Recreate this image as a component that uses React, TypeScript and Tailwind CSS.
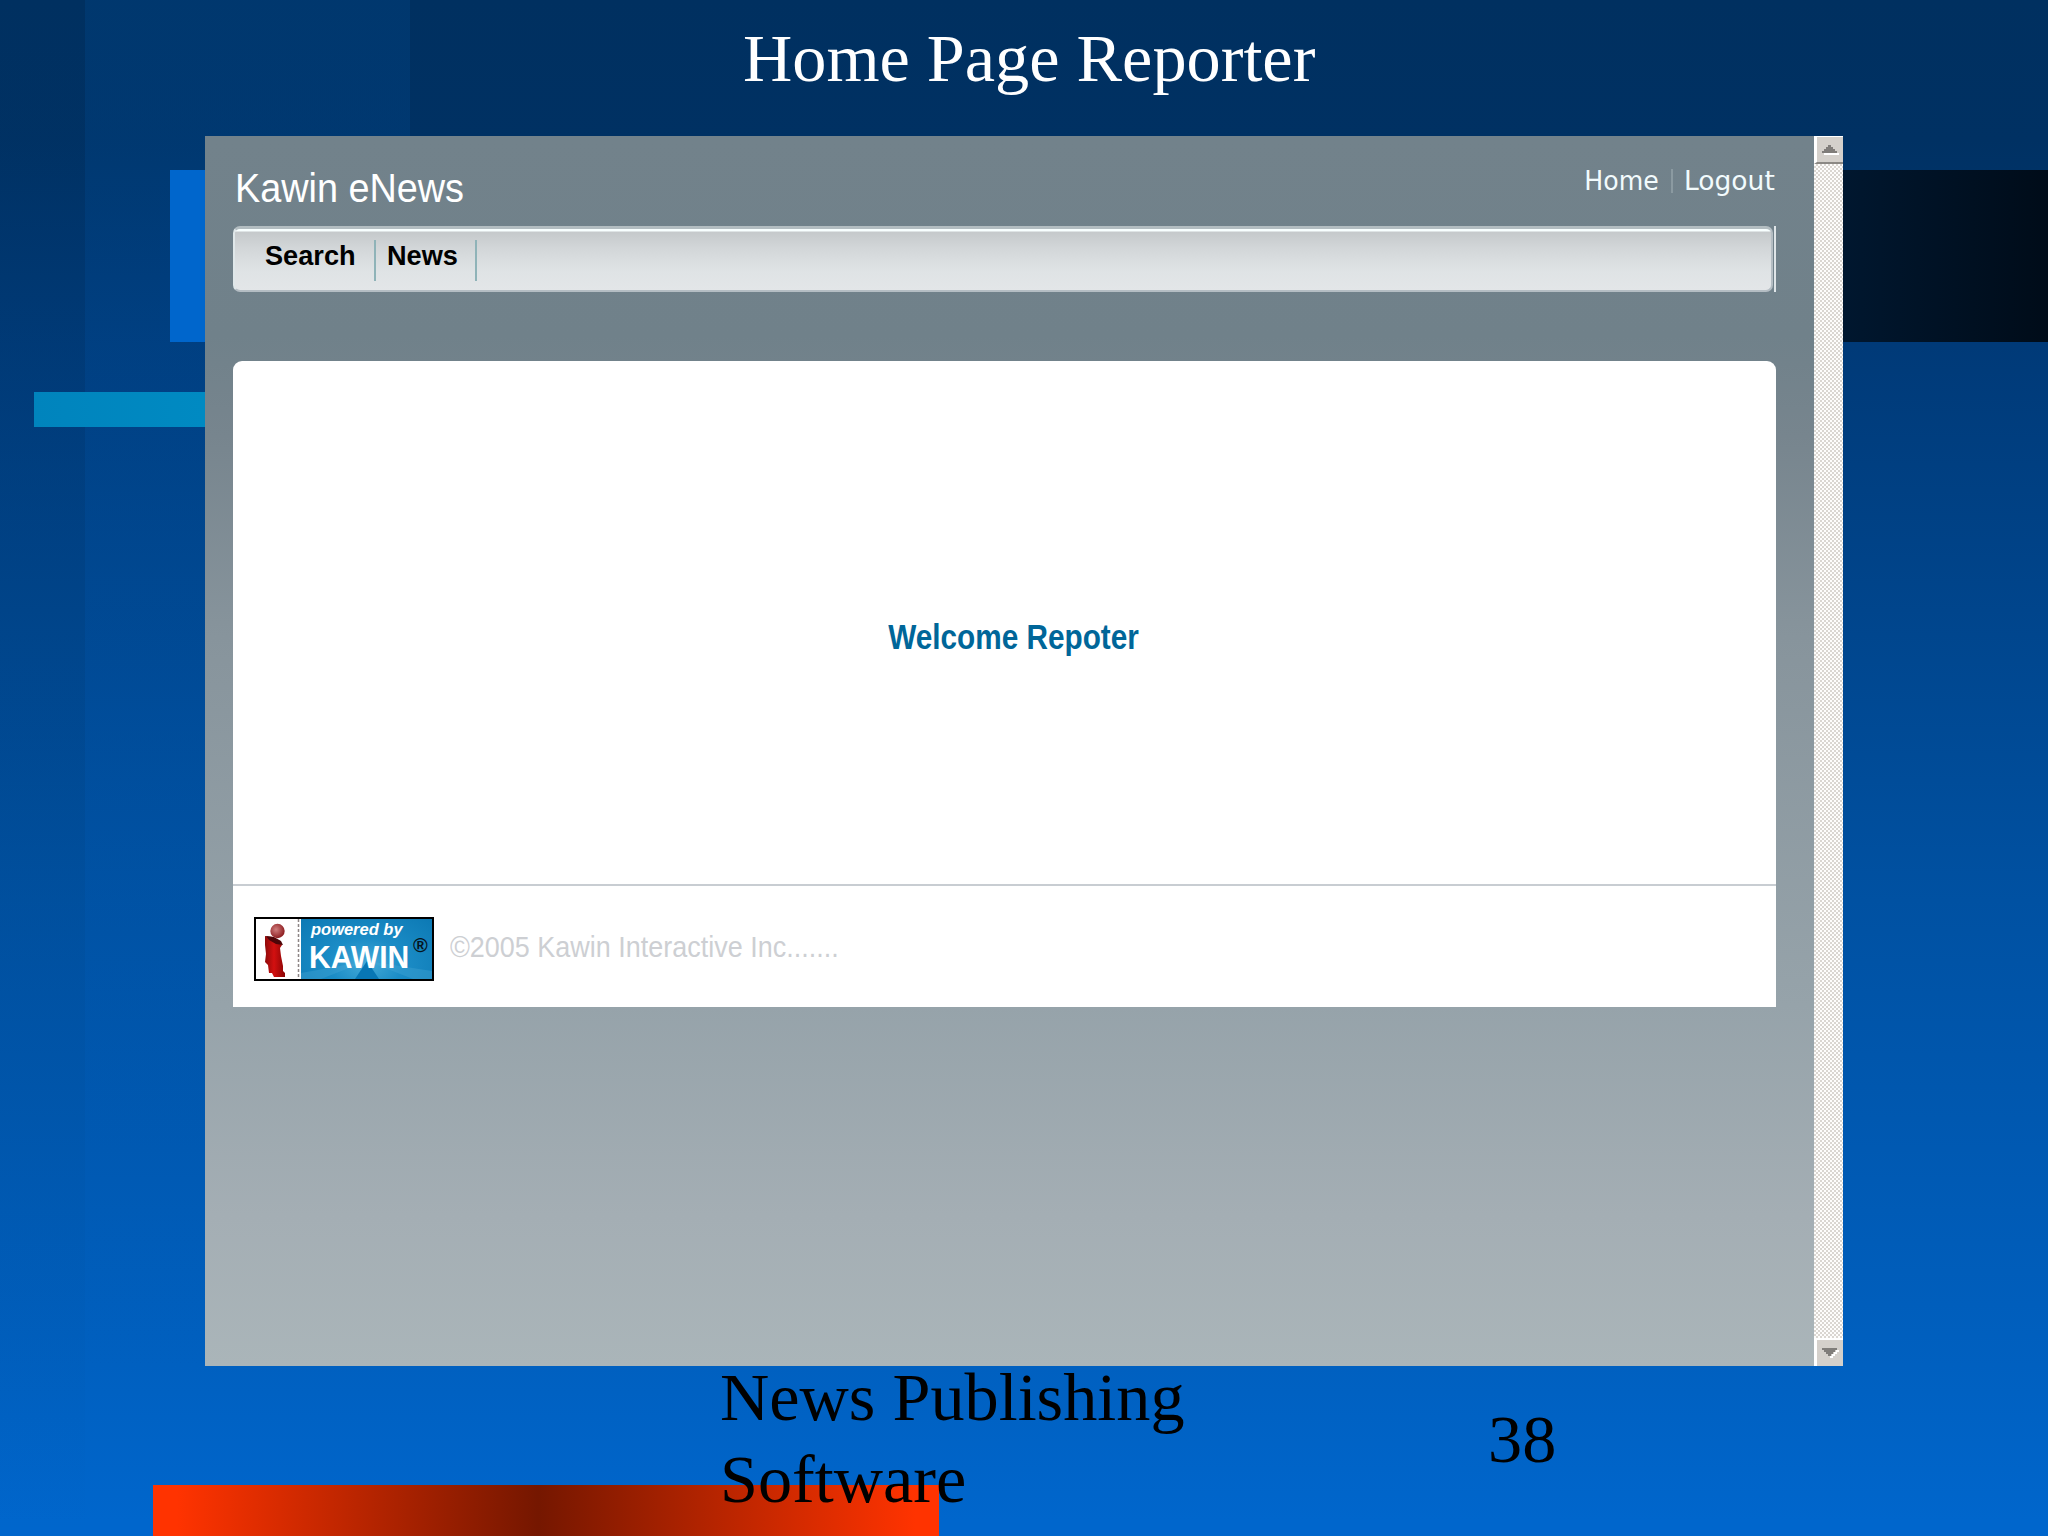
import React from "react";

function Backdrop() {
  return (
    <div className="absolute inset-0 bg-[linear-gradient(to_bottom,#003060_0px,#003163_140px,#003a78_345px,#0051a2_900px,#0060c0_1366px,#0066cc_1520px)]">
      <div className="absolute left-0 top-0 h-full w-[85px] bg-[linear-gradient(to_bottom,rgba(0,48,96,0.2),rgba(0,72,140,0.18)_60%,transparent)]" />
      <div className="absolute left-[85px] top-0 h-full w-[325px] bg-[linear-gradient(to_bottom,rgba(0,82,160,0.22),rgba(0,90,180,0.18)_50%,transparent_90%)]" />
      <div className="absolute left-[170px] top-[170px] h-[172px] w-[1878px] bg-[linear-gradient(to_right,#0066cc_0px,#0066cc_40px,#00172f_1673px,#000c19_1878px)]" />
      <div className="absolute left-[34px] top-[392px] h-[35px] w-[300px] bg-[linear-gradient(to_right,#0084bd_0px,#008ac2_171px)]" />
      <div className="absolute left-[153px] top-[1485px] h-[51px] w-[786px] bg-[linear-gradient(to_right,#ff3300_0%,#ff3300_3%,#751700_49%,#ff3300_97%)]" />
    </div>
  );
}

function ScrollButton({ down = false }: { down?: boolean }) {
  return (
    <div
      className={
        down
          ? "flex h-[28px] shrink-0 items-center justify-center border-l-[3px] border-t-2 border-white bg-[#d4d0cb]"
          : "flex h-[28px] shrink-0 items-center justify-center border-b-2 border-l-[3px] border-t border-white border-b-[#8b8884] bg-[#d4d0cb]"
      }
    >
      {down ? (
        <svg width="17" height="12" viewBox="0 0 17 12" shapeRendering="crispEdges">
          <path d="M17 3v2h-2v2h-2v2h-2v2H8V9h2V7h2V5h2V3z" fill="#fff" />
          <path d="M0 1h15v2h-2v2h-2v2H9v2H6V7H4V5H2V3H0z" fill="#807d7a" />
        </svg>
      ) : (
        <svg width="17" height="12" viewBox="0 0 17 12" shapeRendering="crispEdges">
          <path d="M2 9h15v2H2z" fill="#fff" />
          <path d="M0 9V7h2V5h2V3h2V1h3v2h2v2h2v2h2v2z" fill="#807d7a" />
        </svg>
      )}
    </div>
  );
}

function Scrollbar() {
  return (
    <div className="flex w-[29px] flex-col">
      <ScrollButton />
      <div className="flex-1 bg-[#fbfaf8] bg-[repeating-conic-gradient(#dad6d1_0_25%,#fefdfc_0_50%)] bg-[length:4px_4px]" />
      <ScrollButton down />
    </div>
  );
}

function KawinBadge() {
  return (
    <div className="flex h-[64px] w-[180px] border-2 border-black bg-white">
      <svg width="45" height="60" viewBox="0 0 45 60">
        <defs>
          <radialGradient id="head" cx="0.4" cy="0.4" r="0.6">
            <stop offset="0" stopColor="#cf7d7d" />
            <stop offset="1" stopColor="#8f1f22" />
          </radialGradient>
          <linearGradient id="body" x1="0" x2="1">
            <stop offset="0" stopColor="#8f0a0a" />
            <stop offset="0.45" stopColor="#d31010" />
            <stop offset="1" stopColor="#8a0505" />
          </linearGradient>
        </defs>
        <path d="M9 17l8 1 7 4 2 4-2 3 1 8 2 10v5l2 2v4H18l-2-4h-3l-1-8-3-3 1-8-1-9z" fill="url(#body)" />
        <path d="M10 17l8 1 7 4 2 4-7-1-7-4z" fill="#4d0508" />
        <circle cx="21.500" cy="12" r="7.200" fill="url(#head)" />
        <path d="M42.500 0v60" stroke="#8d8585" strokeWidth="1.500" strokeDasharray="3 2" />
      </svg>
      <div className="relative flex-1 overflow-hidden bg-[#1585bf] bg-[radial-gradient(ellipse_at_50%_75%,#45aad8_0%,#1b8cc6_40%,#0c79b4_100%)] text-white">
        <svg className="absolute inset-0" width="131" height="60" viewBox="0 0 131 60">
          <path d="M66 42L54 60H78z" fill="#0876b4" />
          <path d="M66 42L0 54v6h20zM66 42l65 10v8H112z" fill="#4aa9d6" opacity="0.35" />
        </svg>
        <div className="absolute left-[10px] top-[1px] origin-left scale-x-[1.03] whitespace-nowrap font-['Liberation_Sans'] text-[16px] leading-[20px] font-bold italic">powered by</div>
        <div className="absolute left-[8px] top-[21px] origin-left scale-x-[0.97] whitespace-nowrap font-['Liberation_Sans'] text-[31px] leading-[35px] font-bold">KAWIN</div>
        <div className="absolute left-[112px] top-[13px] font-['Liberation_Sans'] text-[20px] leading-[26px] font-bold text-[#06151f]">®</div>
      </div>
    </div>
  );
}

function NavBar() {
  return (
    <div className="flex h-[66px]">
      <nav className="flex flex-1 rounded-[7px] border-2 border-t-[3px] border-[#b4bdc3] border-l-[#dfe7e9] border-t-[#b3bdc1] bg-[linear-gradient(to_bottom,#f8ffff_0px,#f8ffff_2px,#c5c9cb_3px,#d3d7d9_20px,#dfe3e5_42px,#e3e6e8_61px)] pl-[30px] pt-[11px] font-['Liberation_Sans'] text-[28px] font-bold leading-[32px] text-black">
        <div className="h-[41px] w-[111px] border-r-2 border-[#8fb3b8]">
          <span className="inline-block origin-left scale-x-[0.97] whitespace-nowrap">Search</span>
        </div>
        <div className="h-[41px] w-[101px] border-r-2 border-[#8fb3b8] pl-[11px]">
          <span className="inline-block origin-left scale-x-[0.97] whitespace-nowrap">News</span>
        </div>
      </nav>
      <div className="ml-px w-[2px] bg-[#dfe5e8]" />
    </div>
  );
}

function BrowserPane() {
  return (
    <div className="flex h-[1230px] w-[1638px]">
      <div className="flex flex-1 flex-col bg-[linear-gradient(to_bottom,#72828b_0px,#70818a_200px,#77858e_300px,#87949c_500px,#96a3aa_870px,#a4aeb4_1080px,#aab5b9_1230px)] pl-[28px] pr-[38px]">
        <header className="flex h-[90px] items-start justify-between pl-[2px]">
          <h1 className="origin-left scale-x-[0.945] whitespace-nowrap pt-[30px] font-['Liberation_Sans'] text-[40px] leading-[44px] text-white">Kawin eNews</h1>
          <div className="flex items-center pt-[28px] font-['DejaVu_Sans'] text-[26px] leading-[34px] text-[#f2fbfd]">
            <span className="mr-[12px] inline-block origin-right scale-x-[0.97]">Home</span>
            <span className="mr-[11px] h-[24px] w-[2px] bg-[#8b9aa1]" />
            <span className="origin-left scale-x-[1.02] whitespace-nowrap pr-[3px]">Logout</span>
          </div>
        </header>
        <NavBar />
        <main className="mt-[69px] flex h-[646px] flex-col rounded-t-[9px] bg-white">
          <div className="flex h-[525px] items-center justify-center border-b-2 border-[#c8cdd2]">
            <p className="mt-[28px] mr-[-17px] scale-x-[0.85] whitespace-nowrap font-['Liberation_Sans'] text-[35px] font-bold leading-[40px] text-[#006699]">Welcome Repoter</p>
          </div>
          <footer className="flex flex-1 items-start pl-[21px] pt-[31px]">
            <KawinBadge />
            <p className="ml-[16px] mt-[13px] origin-left scale-x-[0.93] whitespace-nowrap font-['Liberation_Sans'] text-[29px] leading-[34px] text-[#cdcfd3]">©2005 Kawin Interactive Inc.......</p>
          </footer>
        </main>
      </div>
      <Scrollbar />
    </div>
  );
}

export default function App() {
  return (
    <div className="relative h-[1536px] w-[2048px] overflow-hidden">
      <Backdrop />
      <div className="relative flex flex-col pl-[205px] font-['Liberation_Serif']">
        <h2 className="h-[136px] whitespace-nowrap pl-[538px] pt-[18px] text-[68.250px] leading-[80px] text-white">Home Page Reporter</h2>
        <BrowserPane />
        <div className="flex h-[170px] pl-[515px] text-[68.250px] leading-[82px] text-black">
          <p className="-mt-[10px] w-[768px] whitespace-nowrap">News Publishing<br />Software</p>
          <p className="mt-[32px]">38</p>
        </div>
      </div>
    </div>
  );
}
